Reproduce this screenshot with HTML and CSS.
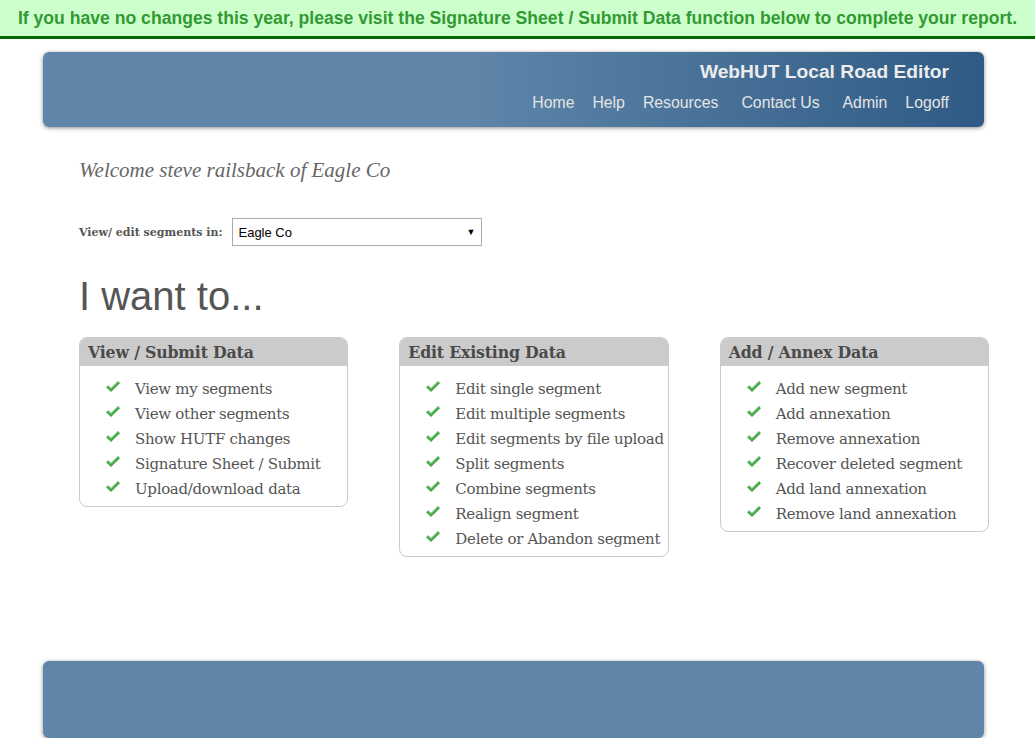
FILE: index.html
```html
<!DOCTYPE html>
<html>
<head>
<meta charset="utf-8">
<title>WebHUT Local Road Editor</title>
<link rel="stylesheet" href="styles.css">
</head>
<body>
<div class="notice">If you have no changes this year, please visit the Signature Sheet / Submit Data function below to complete your report.</div>
<div class="page">
  <header class="header">
    <div class="title">WebHUT Local Road Editor</div>
    <nav class="nav">
      <a href="#">Home</a>
      <a href="#">Help</a>
      <a href="#" class="wide">Resources</a>
      <a href="#" class="wide">Contact Us</a>
      <a href="#">Admin</a>
      <a href="#">Logoff</a>
    </nav>
  </header>
  <main class="content">
    <p class="welcome">Welcome steve railsback of Eagle Co</p>
    <div class="picker">
      <label class="picker-label">View/ edit segments in:</label>
      <div class="select"><span>Eagle Co</span><span class="arrow">&#9660;</span></div>
    </div>
    <h1 class="want">I want to...</h1>
    <div class="boxes">
      <section class="box">
        <h2 class="box-title">View / Submit Data</h2>
        <ul class="list">
          <li><svg class="check" viewBox="0 0 16 13"><path d="M1 7.2 L3.2 5.2 L6 8 L13 1 L15 3.2 L6 12 Z" fill="#4aa84a"/><path d="M1.6 7.2 L3.2 5.8 L6 8.6 L13 1.6" fill="none" stroke="#8fd48f" stroke-width="0.8"/></svg>View my segments</li>
          <li><svg class="check" viewBox="0 0 16 13"><path d="M1 7.2 L3.2 5.2 L6 8 L13 1 L15 3.2 L6 12 Z" fill="#4aa84a"/><path d="M1.6 7.2 L3.2 5.8 L6 8.6 L13 1.6" fill="none" stroke="#8fd48f" stroke-width="0.8"/></svg>View other segments</li>
          <li><svg class="check" viewBox="0 0 16 13"><path d="M1 7.2 L3.2 5.2 L6 8 L13 1 L15 3.2 L6 12 Z" fill="#4aa84a"/><path d="M1.6 7.2 L3.2 5.8 L6 8.6 L13 1.6" fill="none" stroke="#8fd48f" stroke-width="0.8"/></svg>Show HUTF changes</li>
          <li><svg class="check" viewBox="0 0 16 13"><path d="M1 7.2 L3.2 5.2 L6 8 L13 1 L15 3.2 L6 12 Z" fill="#4aa84a"/><path d="M1.6 7.2 L3.2 5.8 L6 8.6 L13 1.6" fill="none" stroke="#8fd48f" stroke-width="0.8"/></svg>Signature Sheet / Submit</li>
          <li><svg class="check" viewBox="0 0 16 13"><path d="M1 7.2 L3.2 5.2 L6 8 L13 1 L15 3.2 L6 12 Z" fill="#4aa84a"/><path d="M1.6 7.2 L3.2 5.8 L6 8.6 L13 1.6" fill="none" stroke="#8fd48f" stroke-width="0.8"/></svg>Upload/download data</li>
        </ul>
      </section>
      <section class="box">
        <h2 class="box-title">Edit Existing Data</h2>
        <ul class="list">
          <li><svg class="check" viewBox="0 0 16 13"><path d="M1 7.2 L3.2 5.2 L6 8 L13 1 L15 3.2 L6 12 Z" fill="#4aa84a"/><path d="M1.6 7.2 L3.2 5.8 L6 8.6 L13 1.6" fill="none" stroke="#8fd48f" stroke-width="0.8"/></svg>Edit single segment</li>
          <li><svg class="check" viewBox="0 0 16 13"><path d="M1 7.2 L3.2 5.2 L6 8 L13 1 L15 3.2 L6 12 Z" fill="#4aa84a"/><path d="M1.6 7.2 L3.2 5.8 L6 8.6 L13 1.6" fill="none" stroke="#8fd48f" stroke-width="0.8"/></svg>Edit multiple segments</li>
          <li><svg class="check" viewBox="0 0 16 13"><path d="M1 7.2 L3.2 5.2 L6 8 L13 1 L15 3.2 L6 12 Z" fill="#4aa84a"/><path d="M1.6 7.2 L3.2 5.8 L6 8.6 L13 1.6" fill="none" stroke="#8fd48f" stroke-width="0.8"/></svg>Edit segments by file upload</li>
          <li><svg class="check" viewBox="0 0 16 13"><path d="M1 7.2 L3.2 5.2 L6 8 L13 1 L15 3.2 L6 12 Z" fill="#4aa84a"/><path d="M1.6 7.2 L3.2 5.8 L6 8.6 L13 1.6" fill="none" stroke="#8fd48f" stroke-width="0.8"/></svg>Split segments</li>
          <li><svg class="check" viewBox="0 0 16 13"><path d="M1 7.2 L3.2 5.2 L6 8 L13 1 L15 3.2 L6 12 Z" fill="#4aa84a"/><path d="M1.6 7.2 L3.2 5.8 L6 8.6 L13 1.6" fill="none" stroke="#8fd48f" stroke-width="0.8"/></svg>Combine segments</li>
          <li><svg class="check" viewBox="0 0 16 13"><path d="M1 7.2 L3.2 5.2 L6 8 L13 1 L15 3.2 L6 12 Z" fill="#4aa84a"/><path d="M1.6 7.2 L3.2 5.8 L6 8.6 L13 1.6" fill="none" stroke="#8fd48f" stroke-width="0.8"/></svg>Realign segment</li>
          <li><svg class="check" viewBox="0 0 16 13"><path d="M1 7.2 L3.2 5.2 L6 8 L13 1 L15 3.2 L6 12 Z" fill="#4aa84a"/><path d="M1.6 7.2 L3.2 5.8 L6 8.6 L13 1.6" fill="none" stroke="#8fd48f" stroke-width="0.8"/></svg>Delete or Abandon segment</li>
        </ul>
      </section>
      <section class="box">
        <h2 class="box-title">Add / Annex Data</h2>
        <ul class="list">
          <li><svg class="check" viewBox="0 0 16 13"><path d="M1 7.2 L3.2 5.2 L6 8 L13 1 L15 3.2 L6 12 Z" fill="#4aa84a"/><path d="M1.6 7.2 L3.2 5.8 L6 8.6 L13 1.6" fill="none" stroke="#8fd48f" stroke-width="0.8"/></svg>Add new segment</li>
          <li><svg class="check" viewBox="0 0 16 13"><path d="M1 7.2 L3.2 5.2 L6 8 L13 1 L15 3.2 L6 12 Z" fill="#4aa84a"/><path d="M1.6 7.2 L3.2 5.8 L6 8.6 L13 1.6" fill="none" stroke="#8fd48f" stroke-width="0.8"/></svg>Add annexation</li>
          <li><svg class="check" viewBox="0 0 16 13"><path d="M1 7.2 L3.2 5.2 L6 8 L13 1 L15 3.2 L6 12 Z" fill="#4aa84a"/><path d="M1.6 7.2 L3.2 5.8 L6 8.6 L13 1.6" fill="none" stroke="#8fd48f" stroke-width="0.8"/></svg>Remove annexation</li>
          <li><svg class="check" viewBox="0 0 16 13"><path d="M1 7.2 L3.2 5.2 L6 8 L13 1 L15 3.2 L6 12 Z" fill="#4aa84a"/><path d="M1.6 7.2 L3.2 5.8 L6 8.6 L13 1.6" fill="none" stroke="#8fd48f" stroke-width="0.8"/></svg>Recover deleted segment</li>
          <li><svg class="check" viewBox="0 0 16 13"><path d="M1 7.2 L3.2 5.2 L6 8 L13 1 L15 3.2 L6 12 Z" fill="#4aa84a"/><path d="M1.6 7.2 L3.2 5.8 L6 8.6 L13 1.6" fill="none" stroke="#8fd48f" stroke-width="0.8"/></svg>Add land annexation</li>
          <li><svg class="check" viewBox="0 0 16 13"><path d="M1 7.2 L3.2 5.2 L6 8 L13 1 L15 3.2 L6 12 Z" fill="#4aa84a"/><path d="M1.6 7.2 L3.2 5.8 L6 8.6 L13 1.6" fill="none" stroke="#8fd48f" stroke-width="0.8"/></svg>Remove land annexation</li>
        </ul>
      </section>
    </div>
  </main>
  <footer class="footer"></footer>
</div>
</body>
</html>
```

FILE: styles.css
```css
html, body {
  margin: 0;
  padding: 0;
  background: #ffffff;
}

body {
  font-family: "Liberation Sans", Arial, sans-serif;
}

.notice {
  background: #ccffcc;
  color: #339933;
  font-weight: bold;
  font-size: 17.6px;
  text-align: center;
  height: 36px;
  line-height: 36px;
  border-bottom: 3px solid #006600;
  white-space: nowrap;
}

.page {
  width: 941px;
  margin: 13px 0 0 43px;
}

.header {
  height: 75px;
  border-radius: 6px;
  background: linear-gradient(to right, #5f86a9 0%, #5f86a9 45%, #2e5a84 100%);
  box-shadow: 0 1px 4px rgba(0, 0, 0, 0.45);
  display: flex;
  flex-direction: column;
  align-items: flex-end;
  padding-right: 35px;
  box-sizing: border-box;
}

.title {
  color: #ececec;
  font-weight: bold;
  font-size: 19.2px;
  margin-top: 9px;
  line-height: 22px;
}

.nav {
  display: flex;
  margin-top: 10px;
  gap: 18px;
}

.nav a {
  color: #e4e4e4;
  text-decoration: none;
  font-size: 15.8px;
  line-height: 20px;
}

.nav a.wide {
  margin-right: 5px;
}

.content {
  padding-left: 36px;
  height: 534px;
  box-sizing: border-box;
  padding-top: 30px;
}

.welcome {
  margin: 0;
  font-family: "Liberation Serif", "Times New Roman", serif;
  font-style: italic;
  font-size: 21px;
  color: #666666;
  line-height: 26px;
}

.picker {
  display: flex;
  align-items: center;
  margin-top: 35px;
}

.picker-label {
  font-family: "DejaVu Serif", Georgia, serif;
  font-weight: bold;
  font-size: 11px;
  color: #555555;
  margin-right: 10px;
}

.select {
  width: 250px;
  height: 28px;
  box-sizing: border-box;
  border: 1px solid #aaaaaa;
  display: flex;
  align-items: center;
  justify-content: space-between;
  padding: 0 6px 0 5px;
  font-family: "Liberation Sans", Arial, sans-serif;
  font-size: 13px;
  color: #000;
}

.arrow {
  font-size: 9px;
}

.want {
  margin: 27px 0 0 0;
  font-weight: normal;
  font-size: 40px;
  line-height: 46px;
  color: #555555;
  font-family: "Liberation Sans", Arial, sans-serif;
}

.boxes {
  display: flex;
  align-items: flex-start;
  gap: 51px;
  margin-top: 18px;
  width: 910px;
}

.box {
  width: 270px;
  box-sizing: border-box;
  border: 1px solid #cccccc;
  border-radius: 8px;
  overflow: hidden;
}

.box-title {
  margin: 0;
  background: #cbcbcb;
  height: 28px;
  line-height: 30px;
  padding-left: 8px;
  font-family: "DejaVu Serif", Georgia, serif;
  font-weight: bold;
  font-size: 15.8px;
  color: #4a4a4a;
  letter-spacing: -0.2px;
}

.list {
  list-style: none;
  margin: 0;
  padding: 10px 0 5px 25px;
}

.list li {
  display: flex;
  align-items: center;
  height: 25px;
  font-family: "DejaVu Serif", Georgia, serif;
  font-size: 15px;
  color: #555555;
  letter-spacing: -0.3px;
}

.check {
  width: 16px;
  height: 13px;
  margin-right: 14px;
  margin-top: -5px;
  flex: none;
}

.footer {
  height: 77px;
  border-radius: 6px;
  background: #5f85a8;
  box-shadow: 0 1px 4px rgba(0, 0, 0, 0.45);
}
```
